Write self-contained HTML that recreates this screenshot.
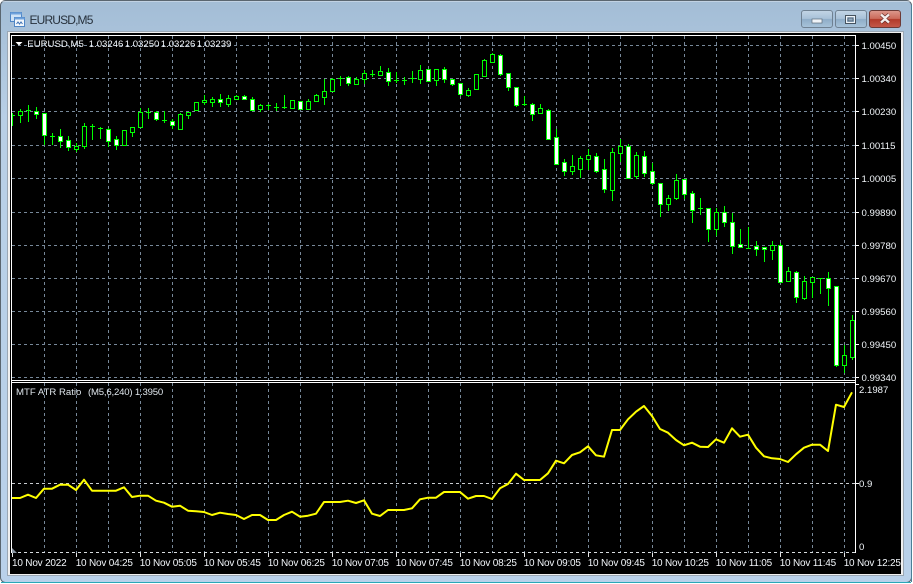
<!DOCTYPE html>
<html><head><meta charset="utf-8"><style>
html,body{margin:0;padding:0;width:913px;height:584px;overflow:hidden;background:#fff}
svg{display:block}
text{font-family:"Liberation Sans",sans-serif}
.l{font-size:10px;fill:#f2f6fa;letter-spacing:-.2px}
.p{font-size:9.6px;fill:#f2f6fa}
.q{font-size:9.6px;fill:#dfe6ec}
</style></head><body>
<svg width="913" height="584" viewBox="0 0 913 584" xmlns="http://www.w3.org/2000/svg">
<defs>
<linearGradient id="gl" x1="0" y1="0" x2="0" y2="1"><stop offset="0" stop-color="#a3bdd6"/><stop offset=".06" stop-color="#a9c2da"/><stop offset=".2" stop-color="#b8cfe6"/><stop offset="1" stop-color="#b9d1ea"/></linearGradient>
<linearGradient id="btn" x1="0" y1="0" x2="0" y2="1"><stop offset="0" stop-color="#c3d5e6"/><stop offset=".48" stop-color="#a8c1d8"/><stop offset=".52" stop-color="#8fadc8"/><stop offset="1" stop-color="#a9c4da"/></linearGradient>
<linearGradient id="cls" x1="0" y1="0" x2="0" y2="1"><stop offset="0" stop-color="#dd9a8e"/><stop offset=".48" stop-color="#cc6a5a"/><stop offset=".52" stop-color="#b23a2a"/><stop offset="1" stop-color="#c4594a"/></linearGradient>
<clipPath id="c"><rect x="12" y="36" width="843" height="344"/></clipPath>
<clipPath id="d"><rect x="12" y="383" width="843" height="170"/></clipPath>
</defs>
<!-- window -->
<rect width="913" height="584" fill="#fff"/>
<rect x=".5" y=".5" width="911" height="582" rx="5" fill="url(#gl)" stroke="#5a6670"/>
<path d="M1 582.5H911" stroke="#2aa7b8"/>
<path d="M911.5 5V582" stroke="#4a7f96"/>
<rect x="1" y="1" width="910" height="1" fill="#dfe8f0" opacity=".5"/>
<!-- title icon -->
<g shape-rendering="crispEdges">
<rect x="10.5" y="12.5" width="11" height="9" fill="#cfe2f6" stroke="#4f86c6"/>
<rect x="10.5" y="12.5" width="11" height="2" fill="#6fa2dc"/>
<rect x="14.5" y="17.5" width="10" height="9" fill="#f2f7fc" stroke="#4f86c6"/>
<rect x="14.5" y="17.5" width="10" height="2" fill="#6fa2dc"/>
</g>
<path d="M16.5 24l1.5-2 1.500 2 1.500-2 1.500 2" fill="none" stroke="#3f72b4"/>
<text x="29.5" y="24" font-size="12px" fill="#27313c" letter-spacing="-.85">EURUSD,M5</text>
<!-- buttons -->
<rect x="801.5" y="10.5" width="31" height="17" rx="2.5" fill="url(#btn)" stroke="#6f8192"/>
<rect x="835.5" y="10.5" width="31" height="17" rx="2.5" fill="url(#btn)" stroke="#6f8192"/>
<rect x="869.5" y="10.5" width="31" height="17" rx="2.5" fill="url(#cls)" stroke="#6d3a36"/>
<rect x="812" y="19" width="10" height="4" fill="#f0f4f8" stroke="#5d6c7a" stroke-width=".7"/>
<rect x="845.5" y="15.5" width="10" height="8" fill="none" stroke="#46525e" stroke-width="1"/>
<rect x="846.5" y="16.5" width="8" height="6" fill="none" stroke="#eef3f7" stroke-width="1"/>
<rect x="848" y="18" width="5" height="3" fill="#8fa9c0" stroke="#46525e" stroke-width=".7"/>
<path d="M881 14.5l4 3.500 4-3.500M881 22.500l4-3.500 4 3.500" fill="none" stroke="#5e2a26" stroke-width="3.6"/>
<path d="M881 14.5l4 3.500 4-3.500M881 22.500l4-3.500 4 3.500" fill="none" stroke="#f6efee" stroke-width="2.4"/>
<!-- client area -->
<rect x="7.5" y="31.5" width="896" height="544" fill="#f0f0f0" stroke="#9aa7b4"/>
<rect x="10" y="33" width="891" height="541" fill="#000"/>
<!-- frames -->
<g shape-rendering="crispEdges" fill="none">
<path d="M11.5 35V553M11 35.5H856M855.5 35V553M11 380.5H856M11 382.5H856" stroke="#fff"/>
<!-- grid -->
<g stroke="#778899" stroke-dasharray="3 3">
<path d="M12 45.5H855M12 78.5H855M12 111.5H855M12 145.5H855M12 178.5H855M12 212.5H855M12 245.5H855M12 278.5H855M12 311.5H855M12 344.5H855M12 377.5H855"/>
<path d="M44.5 36V380M76.5 36V380M108.5 36V380M140.5 36V380M172.5 36V380M204.5 36V380M236.5 36V380M268.5 36V380M300.5 36V380M332.5 36V380M364.5 36V380M396.5 36V380M428.5 36V380M460.5 36V380M492.5 36V380M524.5 36V380M556.5 36V380M588.5 36V380M620.5 36V380M652.5 36V380M684.5 36V380M716.5 36V380M748.5 36V380M780.5 36V380M812.5 36V380M844.5 36V380"/>
<path d="M44.5 383V553M76.5 383V553M108.5 383V553M140.5 383V553M172.5 383V553M204.5 383V553M236.5 383V553M268.5 383V553M300.5 383V553M332.5 383V553M364.5 383V553M396.5 383V553M428.5 383V553M460.5 383V553M492.5 383V553M524.5 383V553M556.5 383V553M588.5 383V553M620.5 383V553M652.5 383V553M684.5 383V553M716.5 383V553M748.5 383V553M780.5 383V553M812.5 383V553M844.5 383V553"/>
</g>
<path d="M12 483.5H855" stroke="#c8ccd0" stroke-dasharray="3 3"/>
<path d="M12 552.5H855" stroke="#d8dcdf" stroke-dasharray="3 3"/>
<!-- ticks -->
<path d="M856 45.5h3M856 78.5h3M856 111.5h3M856 145.5h3M856 178.5h3M856 212.5h3M856 245.5h3M856 278.5h3M856 311.5h3M856 344.5h3M856 377.5h3M856 384.5h3M856 483.5h3" stroke="#fff"/>
<path d="M12.5 553v4M76.5 553v4M140.5 553v4M204.5 553v4M268.5 553v4M332.5 553v4M396.5 553v4M460.5 553v4M524.5 553v4M588.5 553v4M652.5 553v4M716.5 553v4M780.5 553v4M844.5 553v4" stroke="#fff" stroke-opacity=".9"/>
</g>
<path d="M12 548v5h5z" fill="#8c98a4"/>
<path d="M15.5 42h7l-3.500 3.500z" fill="#fff"/>
<!-- candles -->
<g clip-path="url(#c)" shape-rendering="crispEdges">
<path fill="none" stroke="#00ff00" d="M12.5 113V126M20.5 109V123M28.5 105V122M36.5 107V119M44.5 113V145M52.5 133V145M60.5 129V148M68.5 136V151M76.5 143V152M84.5 123V149M92.5 124V140M100.5 127V139M108.5 128V147M116.5 136V150M124.5 130V145M132.5 127V137M140.5 108V127M148.5 108V119M156.5 111V121M164.5 111V123M172.5 119V129M180.5 113V129M188.5 112V119M196.5 102V110M204.5 95V105M212.5 97V107M220.5 94V107M228.5 95V107M236.5 95V100M244.5 95V100M252.5 97V111M260.5 104V112M268.5 104V110M276.5 103V111M284.5 95V109M292.5 100V109M300.5 101V109M308.5 99V109M316.5 94V102M324.5 79V105M332.5 78V92M340.5 76V86M348.5 76V86M356.5 77V85M364.5 70V84M372.5 70V77M380.5 66V76M388.5 68V86M396.5 72V83M404.5 77V85M412.5 71V83M420.5 65V84M428.5 69V82M436.5 69V86M444.5 67V83M452.5 79V86M460.5 83V96M468.5 88V97M476.5 74V89M484.5 59V77M492.5 53V63M500.5 54V76M508.5 73V91M516.5 87V107M524.5 96V106M532.5 103V121M540.5 104V113M548.5 109V140M556.5 129V165M564.5 159V176M572.5 155V175M580.5 156V178M588.5 149V170M596.5 153V173M604.5 159V193M612.5 148V201M620.5 139V162M628.5 144V178M636.5 152V179M644.5 151V177M652.5 163V185M660.5 183V217M668.5 195V211M676.5 174V200M684.5 179V199M692.5 191V223M700.5 198V215M708.5 208V242M716.5 208V236M724.5 206V227M732.5 213V254M740.5 229V248M748.5 227V249M756.5 241V256M764.5 247V262M772.5 241V260M780.5 243V283M788.5 267V281M796.5 271V303M804.5 276V300M812.5 277V298M820.5 278V294M828.5 272V306M836.5 286V367M844.5 345V373M852.5 315V360"/>
<path fill="none" stroke="#00ff00" d="M10 115.5h5M26 110.5h5M50 136.5h5M90 126.5h5M98 128.5h5M146 112.5h5M162 120.5h5M266 105.5h5M274 107.5h5M282 107.5h5M338 78.5h5M370 74.5h5M394 80.5h5M402 80.5h5M410 78.5h5M522 104.5h5M698 208.5h5M746 248.5h5M818 278.5h5"/>
<path fill="#000" stroke="#00ff00" d="M18.5 111.500h4V115.500h-4zM74.500 146.500h4V149.500h-4zM82.500 126.500h4V146.500h-4zM122.500 130.500h4V145.500h-4zM130.500 127.500h4V132.500h-4zM138.500 112.500h4V127.500h-4zM178.500 114.500h4V129.500h-4zM186.500 112.500h4V115.500h-4zM194.500 102.500h4V110.500h-4zM202.500 100.500h4V102.500h-4zM210.500 99.500h4V102.500h-4zM226.500 98.500h4V104.500h-4zM234.500 96.500h4V99.500h-4zM258.500 105.500h4V109.500h-4zM290.500 100.500h4V108.500h-4zM306.500 101.500h4V109.500h-4zM314.500 95.500h4V101.500h-4zM322.500 91.500h4V97.500h-4zM330.500 79.500h4V91.500h-4zM354.500 79.500h4V84.500h-4zM362.500 73.500h4V79.500h-4zM378.500 71.500h4V75.500h-4zM418.500 70.500h4V79.500h-4zM434.500 69.500h4V80.500h-4zM466.500 90.500h4V95.500h-4zM474.500 74.500h4V89.500h-4zM482.500 60.500h4V76.500h-4zM490.500 54.500h4V62.500h-4zM538.500 108.500h4V113.500h-4zM570.500 166.500h4V171.500h-4zM578.500 158.500h4V169.500h-4zM586.500 155.500h4V159.500h-4zM610.500 152.500h4V190.500h-4zM618.500 146.500h4V153.500h-4zM634.500 155.500h4V176.500h-4zM666.500 198.500h4V204.500h-4zM674.500 180.500h4V198.500h-4zM714.500 212.500h4V229.500h-4zM770.500 245.500h4V250.500h-4zM786.500 271.500h4V281.500h-4zM802.500 281.500h4V298.500h-4zM810.500 277.500h4V282.500h-4zM842.500 355.500h4V365.500h-4zM850.500 320.500h4V357.500h-4z"/>
<path fill="#fff" stroke="#00ff00" d="M34.500 111.500h4V114.500h-4zM42.500 113.500h4V135.500h-4zM58.500 136.500h4V141.500h-4zM66.500 140.500h4V147.500h-4zM106.500 129.500h4V141.500h-4zM114.500 139.500h4V145.500h-4zM154.500 112.500h4V119.500h-4zM170.500 121.500h4V125.500h-4zM218.500 99.500h4V102.500h-4zM242.500 96.500h4V99.500h-4zM250.500 99.500h4V110.500h-4zM298.500 101.500h4V109.500h-4zM346.500 77.500h4V83.500h-4zM386.500 72.500h4V81.500h-4zM426.500 69.500h4V81.500h-4zM442.500 69.500h4V79.500h-4zM450.500 79.500h4V84.500h-4zM458.500 83.500h4V94.500h-4zM498.500 55.500h4V74.500h-4zM506.500 73.500h4V87.500h-4zM514.500 87.500h4V105.500h-4zM530.500 104.500h4V114.500h-4zM546.500 110.500h4V139.500h-4zM554.500 137.500h4V164.500h-4zM562.500 162.500h4V171.500h-4zM594.500 156.500h4V171.500h-4zM602.500 169.500h4V189.500h-4zM626.500 146.500h4V178.500h-4zM642.500 156.500h4V173.500h-4zM650.500 171.500h4V183.500h-4zM658.500 183.500h4V204.500h-4zM682.500 179.500h4V194.500h-4zM690.500 193.500h4V210.500h-4zM706.500 208.500h4V229.500h-4zM722.500 212.500h4V222.500h-4zM730.500 222.500h4V246.500h-4zM738.500 244.500h4V247.500h-4zM754.500 246.500h4V249.500h-4zM762.500 247.500h4V249.500h-4zM778.500 245.500h4V282.500h-4zM794.500 272.500h4V297.500h-4zM826.500 278.500h4V288.500h-4zM834.500 286.500h4V365.500h-4z"/>
</g>
<!-- indicator line -->
<polyline clip-path="url(#d)" fill="none" stroke="#ffff00" stroke-width="2" stroke-linejoin="round" points="12,498 20,498 28,494.700 36,498 44,488.700 52,488.700 60,484.700 68,484.700 76,490 84,479.700 92,490.700 100,490.700 108,490.700 116,490.700 124,487.300 132,497 140,495.700 148,495.700 156,500.700 164,502.700 172,506.700 180,505.700 188,510.700 196,511.300 204,512 212,515 220,512.700 228,514 236,515 244,519 252,515 260,515 268,520 276,520 284,515 292,511.700 300,516.700 308,515.700 316,513.700 324,502 332,502 340,502 348,500.700 356,503 364,500.300 372,513.700 380,516 388,510 396,510 404,510 412,508.300 420,499.300 428,497.700 436,497.700 444,492 452,492 460,492 468,498.700 476,496 484,496 492,499 500,488.300 508,484 516,473.700 524,480 532,480 540,480 548,473.300 556,460.700 564,463.300 572,455 580,452.300 588,446.300 596,455.300 604,456.700 612,430 620,430 628,419.300 636,411.700 644,406 652,416 660,429 668,432.700 676,440 684,445.300 692,442.700 700,446.700 708,447 716,439.300 724,442.700 732,428.300 740,436.700 748,434.700 756,447.700 764,456.300 772,458.300 780,459 788,462 796,454.300 804,447.700 812,444.700 820,444.700 828,451 836,404.700 844,407 852,392.300"/>
<!-- labels -->
<g>
<text class="p" x="27.300" y="47">EURUSD,M5</text>
<text class="p" x="88.700" y="47">1.03246</text>
<text class="p" x="124.700" y="47">1.03250</text>
<text class="p" x="160.700" y="47">1.03226</text>
<text class="p" x="196.700" y="47">1.03239</text>
<text class="q" x="16" y="395">MTF ATR Ratio</text>
<text class="q" x="88" y="395" letter-spacing="-.2">(M5,6,240) 1.3950</text>
<text class="p" x="861.500" y="49">1.00450</text>
<text class="p" x="861.500" y="82">1.00340</text>
<text class="p" x="861.500" y="115">1.00230</text>
<text class="p" x="861.500" y="149">1.00115</text>
<text class="p" x="861.500" y="182">1.00005</text>
<text class="p" x="861.500" y="216">0.99890</text>
<text class="p" x="861.500" y="249">0.99780</text>
<text class="p" x="861.500" y="282">0.99670</text>
<text class="p" x="861.500" y="315">0.99560</text>
<text class="p" x="861.500" y="348">0.99450</text>
<text class="p" x="861.500" y="381">0.99340</text>
<text class="p" x="859" y="393">2.1987</text>
<text class="p" x="859" y="487">0.9</text>
<text class="p" x="859" y="550">0</text>
<text class="l" x="12" y="566">10 Nov 2022</text>
<text class="l" x="75.700" y="566">10 Nov 04:25</text>
<text class="l" x="139.700" y="566">10 Nov 05:05</text>
<text class="l" x="203.700" y="566">10 Nov 05:45</text>
<text class="l" x="267.700" y="566">10 Nov 06:25</text>
<text class="l" x="331.700" y="566">10 Nov 07:05</text>
<text class="l" x="395.700" y="566">10 Nov 07:45</text>
<text class="l" x="459.700" y="566">10 Nov 08:25</text>
<text class="l" x="523.700" y="566">10 Nov 09:05</text>
<text class="l" x="587.700" y="566">10 Nov 09:45</text>
<text class="l" x="651.700" y="566">10 Nov 10:25</text>
<text class="l" x="715.700" y="566">10 Nov 11:05</text>
<text class="l" x="779.700" y="566">10 Nov 11:45</text>
<text class="l" x="843.700" y="566">10 Nov 12:25</text>
</g>
</svg>
</body></html>
